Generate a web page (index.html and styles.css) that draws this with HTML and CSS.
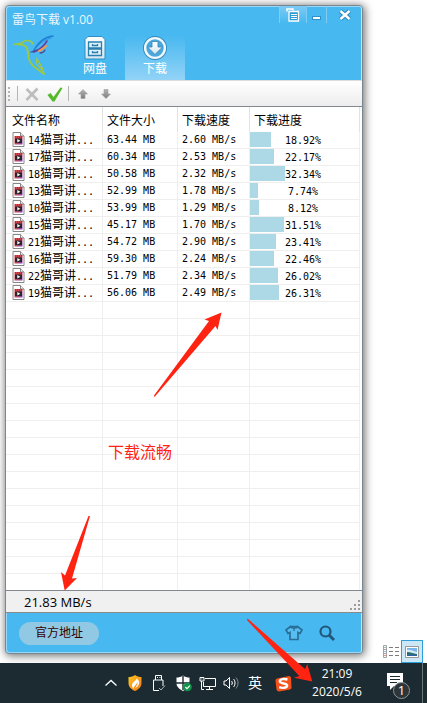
FILE: index.html
```html
<!DOCTYPE html>
<html lang="zh-CN">
<head>
<meta charset="utf-8">
<title>雷鸟下载 v1.00</title>
<meta name="viewport" content="width=device-width, initial-scale=1">
<link rel="stylesheet" href="styles.css">
</head>
<body>
<svg class="defs" aria-hidden="true">
  <defs>
    <linearGradient id="film" x1="0" y1="0" x2="1" y2="1"><stop offset="0" stop-color="#d8484c"/><stop offset=".5" stop-color="#c2454f"/><stop offset="1" stop-color="#7a3fc0"/></linearGradient>
    <linearGradient id="metal" x1="0" y1="0" x2="0" y2="1"><stop offset="0" stop-color="#ffffff"/><stop offset="1" stop-color="#d3e6f0"/></linearGradient>
    <linearGradient id="grey" x1="0" y1="0" x2="0" y2="1"><stop offset="0" stop-color="#b4b4b4"/><stop offset="1" stop-color="#7c7c7c"/></linearGradient>
    <linearGradient id="flame" x1="0" y1="0" x2="1" y2="1"><stop offset="0" stop-color="#ffc81e"/><stop offset="1" stop-color="#f07818"/></linearGradient>
    <symbol id="video" viewBox="0 0 13 15">
      <path d="M1 .5h7.500L12 4v10.500H1z" fill="#fff" stroke="#868686"/>
      <path d="M8.500 .5V4H12" fill="#eee" stroke="#868686"/>
      <path d="M2.500 4h8v8.500h-8z" fill="url(#film)"/>
      <path d="M3.500 4v2M5.500 4v2M7.500 4v2M9.500 4v2" stroke="#8d2f38" stroke-width=".7"/>
      <path d="M3 6.500h7V11H3z" fill="#2b2329"/>
      <path d="M5.300 7l3 1.800-3 1.800z" fill="#fff"/>
    </symbol>
  </defs>
</svg>

<main class="desktop">
  <section class="window">
    <header class="top">
      <div class="titlebar">
        <h1>雷鸟下载 v1.00</h1>
        <div class="controls">
          <button class="ctl menu" aria-label="菜单"><svg width="14" height="14" viewBox="0 0 14 14"><path d="M1 3.500V1h6v1.500" fill="none" stroke="#fff" stroke-width="1.500"/><path d="M3 3.500h9.500V13H3z" fill="#2f9bd6" stroke="#fff" stroke-width="1.300"/><path d="M5 6.500h6M5 8.500h6M5 10.500h6" stroke="#fff"/></svg></button>
          <button class="ctl min" aria-label="最小化"><svg width="11" height="14" viewBox="0 0 11 14"><path d="M1 10h9v4H1z" fill="#2f93cb"/><path d="M2 11h7v2H2z" fill="#fff"/></svg></button>
          <button class="ctl close" aria-label="关闭"><svg width="14" height="12" viewBox="0 0 14 12"><path d="M2.500 2l9 8M11.500 2l-9 8" stroke="#2c88bd" stroke-width="4.500"/><path d="M2.500 2l9 8M11.500 2l-9 8" stroke="#fff" stroke-width="2.400"/></svg></button>
        </div>
      </div>
      <nav class="nav">
        <div class="brand">
          <svg width="42" height="41" viewBox="0 0 42 41" fill="none" stroke-linecap="round">
            <path d="M1 9.500L9 8C12 4 18 5 20 9" stroke="#9dca3c" stroke-width="1.600"/>
            <path d="M5 9.500C12 9 15 12 15 18c0 8 3 12 8 15l8 6" stroke="#9dca3c" stroke-width="1.800"/>
            <path d="M31 39c0-4-5-7-7-10-1-2 0-4 0-5 3 5 6 8 7 15z" stroke="#a8c83c" stroke-width="1.200"/>
            <path d="M20 17C24 9 30 2 40 1" stroke="#1f7fd0" stroke-width="1.600"/>
            <path d="M22 14C27 8 31 5 38 3" stroke="#2f8fe0" stroke-width="1"/>
            <path d="M21 17C26 15 31 11 34 6" stroke="#6a3f9e" stroke-width="1.600"/>
            <path d="M26 16C29 15 31 13 33 11" stroke="#f09a4a" stroke-width="2"/>
            <path d="M18 17l6-2M27 18c2 0 4-1 5-3" stroke="#4b4a9c" stroke-width="1.300"/>
          </svg>
        </div>
        <button class="tab">
          <svg width="24" height="26" viewBox="0 0 24 26"><path d="M5 1.500h14l3 3V24H2V4.500z" fill="url(#metal)" stroke="#2f8fc4" stroke-width="1"/><path d="M5.500 7h13v6h-13zM5.500 14h13v6.500h-13z" fill="#dff0f8" stroke="#2a7fae" stroke-width="1.300"/><path d="M9.500 9v1.500h5V9M9.500 16v1.500h5V16" fill="none" stroke="#2a7fae" stroke-width="1.300"/></svg>
          <span>网盘</span>
        </button>
        <button class="tab active">
          <svg width="24" height="26" viewBox="0 0 24 26"><circle cx="12" cy="13" r="10" fill="none" stroke="#3189bc" stroke-width="4"/><circle cx="12" cy="13" r="9.900" fill="#4aa8dc" stroke="#f2f8fb" stroke-width="2.400"/><path d="M9 6.500h6v5.500h4.500L12 19.500 4.500 12H9z" fill="url(#metal)" stroke="#2f86b8" stroke-width=".8"/></svg>
          <span>下载</span>
        </button>
      </nav>
    </header>

    <div class="toolbar">
      <span class="grip"></span><span class="sep"></span>
      <button class="tool" aria-label="删除"><svg width="16" height="16" viewBox="0 0 16 16"><path d="M2.500 3l11 11M13.500 2.500L2.500 14" stroke="#bdbdbd" stroke-width="2.600"/></svg></button>
      <button class="tool" aria-label="确认"><svg width="16" height="16" viewBox="0 0 16 16"><path d="M.5 9l3-2 3 4L13.500 1.500l2 .5L7.500 15.500h-2z" fill="#55b92c"/></svg></button>
      <span class="sep"></span>
      <button class="tool" aria-label="上移"><svg width="10" height="10" viewBox="0 0 10 10"><path d="M5 .5L9.500 5H7v4.500H3V5H.5z" fill="url(#grey)" stroke="#a0a0a0" stroke-width=".6"/></svg></button>
      <button class="tool" aria-label="下移"><svg width="10" height="10" viewBox="0 0 10 10"><path d="M5 9.500L.5 5H3V.5h4V5h2.500z" fill="url(#grey)" stroke="#a0a0a0" stroke-width=".6"/></svg></button>
    </div>

    <div class="list">
      <table>
        <colgroup><col class="c-name"><col class="c-size"><col class="c-speed"><col></colgroup>
        <thead><tr><th>文件名称</th><th>文件大小</th><th>下载速度</th><th>下载进度</th></tr></thead>
        <tbody>
          <tr><td><div class="file"><svg width="13" height="15"><use href="#video"/></svg><span>14<b>猫哥讲</b>...</span></div></td><td>63.44 MB</td><td>2.60 MB/s</td><td class="prog"><div class="bar" style="width:18.92%"></div><span>18.92%</span></td></tr>
          <tr><td><div class="file"><svg width="13" height="15"><use href="#video"/></svg><span>17<b>猫哥讲</b>...</span></div></td><td>60.34 MB</td><td>2.53 MB/s</td><td class="prog"><div class="bar" style="width:22.17%"></div><span>22.17%</span></td></tr>
          <tr><td><div class="file"><svg width="13" height="15"><use href="#video"/></svg><span>18<b>猫哥讲</b>...</span></div></td><td>50.58 MB</td><td>2.32 MB/s</td><td class="prog"><div class="bar" style="width:32.34%"></div><span>32.34%</span></td></tr>
          <tr><td><div class="file"><svg width="13" height="15"><use href="#video"/></svg><span>13<b>猫哥讲</b>...</span></div></td><td>52.99 MB</td><td>1.78 MB/s</td><td class="prog"><div class="bar" style="width:7.74%"></div><span>7.74%</span></td></tr>
          <tr><td><div class="file"><svg width="13" height="15"><use href="#video"/></svg><span>10<b>猫哥讲</b>...</span></div></td><td>53.99 MB</td><td>1.29 MB/s</td><td class="prog"><div class="bar" style="width:8.12%"></div><span>8.12%</span></td></tr>
          <tr><td><div class="file"><svg width="13" height="15"><use href="#video"/></svg><span>15<b>猫哥讲</b>...</span></div></td><td>45.17 MB</td><td>1.70 MB/s</td><td class="prog"><div class="bar" style="width:31.51%"></div><span>31.51%</span></td></tr>
          <tr><td><div class="file"><svg width="13" height="15"><use href="#video"/></svg><span>21<b>猫哥讲</b>...</span></div></td><td>54.72 MB</td><td>2.90 MB/s</td><td class="prog"><div class="bar" style="width:23.41%"></div><span>23.41%</span></td></tr>
          <tr><td><div class="file"><svg width="13" height="15"><use href="#video"/></svg><span>16<b>猫哥讲</b>...</span></div></td><td>59.30 MB</td><td>2.24 MB/s</td><td class="prog"><div class="bar" style="width:22.46%"></div><span>22.46%</span></td></tr>
          <tr><td><div class="file"><svg width="13" height="15"><use href="#video"/></svg><span>22<b>猫哥讲</b>...</span></div></td><td>51.79 MB</td><td>2.34 MB/s</td><td class="prog"><div class="bar" style="width:26.02%"></div><span>26.02%</span></td></tr>
          <tr><td><div class="file"><svg width="13" height="15"><use href="#video"/></svg><span>19<b>猫哥讲</b>...</span></div></td><td>56.06 MB</td><td>2.49 MB/s</td><td class="prog"><div class="bar" style="width:26.31%"></div><span>26.31%</span></td></tr>
        </tbody>
      </table>
      <div class="blank"><i class="c-name"></i><i class="c-size"></i><i class="c-speed"></i><i class="rest"></i></div>
    </div>

    <div class="status"><span>21.83 MB/s</span>
      <svg width="12" height="12" viewBox="0 0 12 12" fill="#9c9c9c"><path d="M8 0h2v2H8zM4 4h2v2H4zM8 4h2v2H8zM0 8h2v2H0zM4 8h2v2H4zM8 8h2v2H8z"/></svg>
    </div>

    <footer class="foot">
      <a class="site" href="#">官方地址</a>
      <button class="tool" aria-label="皮肤"><svg width="20" height="18" viewBox="0 0 20 18"><path d="M6.500 2.500L2 6l2 3.500 2-1v7h8v-7l2 1L18 6l-4.500-3.500c-1 2-6 2-7 0z" fill="#58bdf0" stroke="#286f98" stroke-width="1.700"/><path d="M7 2.500h6M10 4v3" fill="none" stroke="#286f98" stroke-width="1.300"/></svg></button>
      <button class="tool" aria-label="搜索"><svg width="18" height="18" viewBox="0 0 18 18"><circle cx="7.500" cy="7.500" r="5" fill="none" stroke="#215778" stroke-width="2.200"/><path d="M11 11l5 5" stroke="#215778" stroke-width="2.800"/></svg></button>
    </footer>
  </section>

  <aside class="views">
    <button class="view" aria-label="详细信息"><svg width="18" height="14" viewBox="0 0 18 14"><path d="M1.500 .5h3v12h-3zM1.500 4.500h3M1.500 8.500h3" fill="#fff" stroke="#a3a3a3"/><path d="M2.500 2h1v1h-1z" fill="#3a8a50"/><path d="M2.500 6h1v1h-1z" fill="#2f6de0"/><path d="M2.500 10h1v1h-1z" fill="#d82a20"/><path d="M7 2.500h4M13 2.500h4M7 6.500h4M13 6.500h4M7 10.500h4M13 10.500h4" stroke="#7c7c7c"/></svg></button>
    <button class="view on" aria-label="缩略图"><svg width="14" height="12" viewBox="0 0 14 12"><path d="M.5 .5h13v11H.5z" fill="#fff" stroke="#999"/><path d="M2 2h10v8H2z" fill="#78b5e8"/><path d="M2 4c3-1 5 1 10 2v2H2z" fill="#d6eaf5"/><path d="M2 6c3 0 5 1 10 2v2H2z" fill="#2d6f72"/><path d="M2 9h10v1H2z" fill="#2a62ad"/></svg></button>
  </aside>
</main>

<footer class="taskbar">
  <button class="tray" aria-label="显示隐藏的图标"><svg width="14" height="8" viewBox="0 0 14 8"><path d="M1.500 6.500L7 1.500l5.500 5" fill="none" stroke="#fff" stroke-width="1.300"/></svg></button>
  <button class="tray" aria-label="安全软件"><svg width="14" height="16" viewBox="0 0 14 16"><path d="M7 0c2 1.500 4 2 6.500 2v6c0 4-3 6.500-6.500 8C3.500 14.500.5 12 .5 8V2C3 2 5 1.500 7 0z" fill="url(#flame)"/><path d="M9 3c0 2-5 4-5 7 0 2 1 3 1.500 4 0-3 3-4 4-7 .5 2-1 4-2.500 6 3-1 4.500-4 4-6.500C10.500 5 9.500 5 9 3z" fill="#fff"/></svg></button>
  <button class="tray" aria-label="USB"><svg width="14" height="18" viewBox="0 0 14 18" fill="none" stroke="#fff"><path d="M3.500 6V1.500h6V6M7 16.500H1.500V6H11v6"/><path d="M5 3.500h1M7.500 3.500h1"/><path d="M7 14l2 2 4-4.500" stroke="#aab4b7"/></svg></button>
  <button class="tray" aria-label="Windows 安全中心"><svg width="17" height="17" viewBox="0 0 17 17"><path d="M8 .5C10 2 12 2.500 14.500 2.500V8c0 4-3 6-6.500 8C4.500 14 1.500 12 1.500 8V2.500C4 2.500 6 2 8 .5z" fill="#fff"/><path d="M8 1v14M1 8h14" stroke="#1c2b31" stroke-width="1.400"/><circle cx="12.500" cy="12" r="4.300" fill="#12934b"/><path d="M10.300 12l1.700 1.600 2.800-3" fill="none" stroke="#fff" stroke-width="1.200"/></svg></button>
  <button class="tray" aria-label="网络"><svg width="17" height="15" viewBox="0 0 17 15" fill="none" stroke="#fff"><path d="M6 2.500h10.500v8H4.500V6M10.500 10.500v3M7 13.500h7M1 1.500h4v3.500H1zM2.500 5v8.500H5"/><path d="M2.500 2.500v1M4 2.500v1" stroke-width=".6"/></svg></button>
  <button class="tray" aria-label="音量"><svg width="17" height="14" viewBox="0 0 17 14" fill="none" stroke="#fff"><path d="M1 5v4h2l3.500 3.500v-11L3 5z"/><path d="M8.500 5c1 1 1 3 0 4M10.500 3c2 2 2 6 0 8"/><path d="M12.800 1.500c3 3 3 8 0 11" stroke="#829096"/></svg></button>
  <button class="tray ime">英</button>
  <button class="tray sogou" aria-label="搜狗输入法"><svg width="17" height="17" viewBox="0 0 17 17"><path d="M2 3.500L14 1q1.500 0 2 1.500l.5 10q0 1.500-1.500 2L4 16.500q-2 0-2.500-2L.5 5.500Q.5 4 2 3.500z" fill="#f4511b"/><path d="M12.500 4.500C9 3.500 4.800 4 4.800 6.300c0 3 7.400 1.500 7.400 4.300 0 2.500-5 2.700-8 1.600" fill="none" stroke="#fff" stroke-width="2.400"/></svg></button>
  <time class="clock" datetime="2020-05-06T21:09"><span>21:09</span><span>2020/5/6</span></time>
  <button class="notice" aria-label="通知"><svg width="26" height="22" viewBox="0 0 26 22"><path d="M1 1h16v13h-9l-4 4v-4H1z" fill="#fff"/><path d="M4 4.500h10M4 7.500h10M4 10.500h7" stroke="#1c2b31"/></svg><span class="badge">1</span></button>
  <span class="peek"></span>
</footer>

<p class="remark">下载流畅</p>
<svg class="arrows" width="427" height="703" viewBox="0 0 427 703" fill="#ff2312" aria-hidden="true">
  <path d="M221.500 312.500L204.500 319.500 209 321 154 395.500 154.500 397 215.500 326 217.500 330z"/>
  <path d="M64.700 590.500L61 572 65 575.500 88.500 516H90L72 578.500 77 578z"/>
  <path d="M312.300 681.500L307.300 664 305 669 247.500 618.500 247 620 299.300 676 294 677.700z"/>
</svg>
</body>
</html>
```

FILE: styles.css
```css
* { box-sizing: border-box; }

html, body { height: 100%; }

body {
  position: relative;
  margin: 0;
  display: flex;
  flex-direction: column;
  min-height: 100vh;
  overflow: hidden;
  background: #fff;
  color: #000;
  font: 12px/16px "Open Sans", "Noto Sans CJK SC", sans-serif;
}

button {
  margin: 0;
  padding: 0;
  border: 0;
  background: none;
  color: inherit;
  font: inherit;
}

svg { display: block; flex: none; }

.defs { position: absolute; width: 0; height: 0; }

.desktop {
  flex: 1;
  min-height: 0;
  display: flex;
  overflow: hidden;
}

/* Application window */
.window {
  flex: 1;
  min-width: 0;
  margin: 5px 0 9px 5px;
  display: flex;
  flex-direction: column;
  border: 1px solid #7b8790;
  border-radius: 4px;
  background: #47b8f0;
  box-shadow: 1px 1px 9px 1px rgba(0, 0, 0, .55);
}

.top {
  border-radius: 3px 3px 0 0;
  box-shadow: inset 1px 1px 0 #9bd6f4, inset -1px 0 0 #c2e4f5;
}

.titlebar {
  display: flex;
  justify-content: space-between;
  height: 29px;
}

h1 {
  margin: 0;
  padding: 6px;
  color: #eaf7fe;
  font-size: 12px;
  line-height: 16px;
  font-weight: 400;
}

.controls { display: flex; height: 17px; }

.ctl {
  display: flex;
  justify-content: center;
  border-right: 1px solid #80cdf3;
}

.menu {
  width: 28px;
  padding-top: 2px;
  border-left: 1px solid #80cdf3;
  background: linear-gradient(#7ccbf4, #47b8f0);
}

.min { width: 20px; }

.close { width: 35px; padding-top: 3px; border: 0; }

.nav { display: flex; height: 45px; }

.brand { width: 59px; padding-left: 7px; }

.tab {
  display: flex;
  flex-direction: column;
  align-items: center;
  width: 60px;
  color: #fff;
}

.tab.active { background: linear-gradient(#47b8f0, #92d3f7); }

.toolbar {
  display: flex;
  align-items: center;
  height: 26px;
  padding-left: 2px;
  border-top: 1px solid #dcdcdc;
  background: linear-gradient(#fff, #ededed);
}

.grip {
  width: 2px;
  height: 14px;
  margin-right: 5px;
  background: repeating-linear-gradient(#b5b5b5 0 2px, transparent 2px 4px);
}

.sep { width: 1px; height: 15px; margin: 0 2px; background: #b5b5b5; }

.toolbar .tool {
  display: flex;
  justify-content: center;
  width: 23px;
}

/* Download list */
.list {
  flex: 1;
  min-height: 0;
  display: flex;
  flex-direction: column;
  padding-right: 2px;
  border-top: 1px solid #828790;
  background: #fff;
}

table {
  width: 100%;
  table-layout: fixed;
  border-collapse: separate;
  border-spacing: 0;
}

.c-name { width: 97px; }
.c-size { width: 75px; }
.c-speed { width: 72px; }

th {
  height: 25px;
  padding: 2px 4px 0;
  border-right: 1px solid #e2e2e2;
  text-align: left;
  font-weight: 400;
}

td {
  height: 17px;
  padding: 0 4px;
  border-right: 1px solid #efefef;
  border-bottom: 1px solid #efefef;
  font: 10px/16px "DejaVu Sans Mono", "Noto Sans CJK SC", monospace;
  white-space: nowrap;
}

th:first-child, td:first-child { padding-left: 6px; }

.file { display: flex; height: 16px; }

.file svg { margin-right: 3px; }

.file b { font-size: 12px; font-weight: 400; }

.prog { position: relative; padding: 1px 7px 0 4px; line-height: 15px; text-align: center; }

.prog span { position: relative; }

.bar {
  position: absolute;
  top: 0;
  left: 0;
  height: 15px;
  background: #add8e6;
}

.blank {
  flex: 1;
  display: flex;
  background: repeating-linear-gradient(transparent 0 16px, #efefef 16px 17px);
}

.blank i { border-right: 1px solid #efefef; }

.rest { flex: 1; }

.status {
  display: flex;
  justify-content: space-between;
  align-items: flex-end;
  height: 23px;
  padding-left: 18px;
  border-top: 1px solid #828790;
  border-bottom: 1px solid #8a8a8a;
  background: #f0f0f0;
}

.status span { align-self: center; font-size: 13px; }

.foot {
  display: flex;
  align-items: center;
  height: 40px;
  gap: 14px;
  padding: 0 26px 0 13px;
  border-radius: 0 0 3px 3px;
  box-shadow: inset 1px -1px 0 #9bd6f4, inset -1px 0 0 #c2e4f5;
}

.site {
  margin-right: auto;
  padding: 3px 16px 4px;
  border-radius: 12px;
  background: #91c9e4;
  color: #300;
  text-decoration: none;
}

/* View switcher to the right of the window */
.views {
  display: flex;
  align-items: flex-end;
  width: 64px;
  padding-left: 17px;
}

.view {
  display: grid;
  place-items: center;
  height: 23px;
  width: 21px;
}

.view.on {
  width: 22px;
  border: 1px solid #2da0da;
  background: #cce8f6;
}

/* Taskbar */
.taskbar {
  display: flex;
  justify-content: flex-end;
  height: 40px;
  background: #1c2b31;
  color: #fff;
}

.tray {
  display: grid;
  place-items: center;
  width: 24px;
}

.ime { font-size: 14px; }

.sogou { width: 32px; }

.clock {
  display: flex;
  flex-direction: column;
  justify-content: center;
  align-items: center;
  width: 76px;
  line-height: 18px;
}

.notice {
  position: relative;
  display: grid;
  place-items: center;
  width: 47px;
}

.badge {
  position: absolute;
  right: 12px;
  bottom: 4px;
  width: 17px;
  height: 17px;
  border: 1px solid #8c9598;
  border-radius: 50%;
  background: #2d3539;
  font-size: 13px;
  line-height: 15px;
}

.peek { width: 5px; border-left: 1px solid #6b7679; }

/* Annotations drawn over the desktop */
.remark {
  position: absolute;
  left: 108px;
  top: 441px;
  margin: 0;
  color: #ff2312;
  font-size: 16px;
  line-height: 22px;
}

.arrows { position: absolute; left: 0; top: 0; pointer-events: none; }
```
